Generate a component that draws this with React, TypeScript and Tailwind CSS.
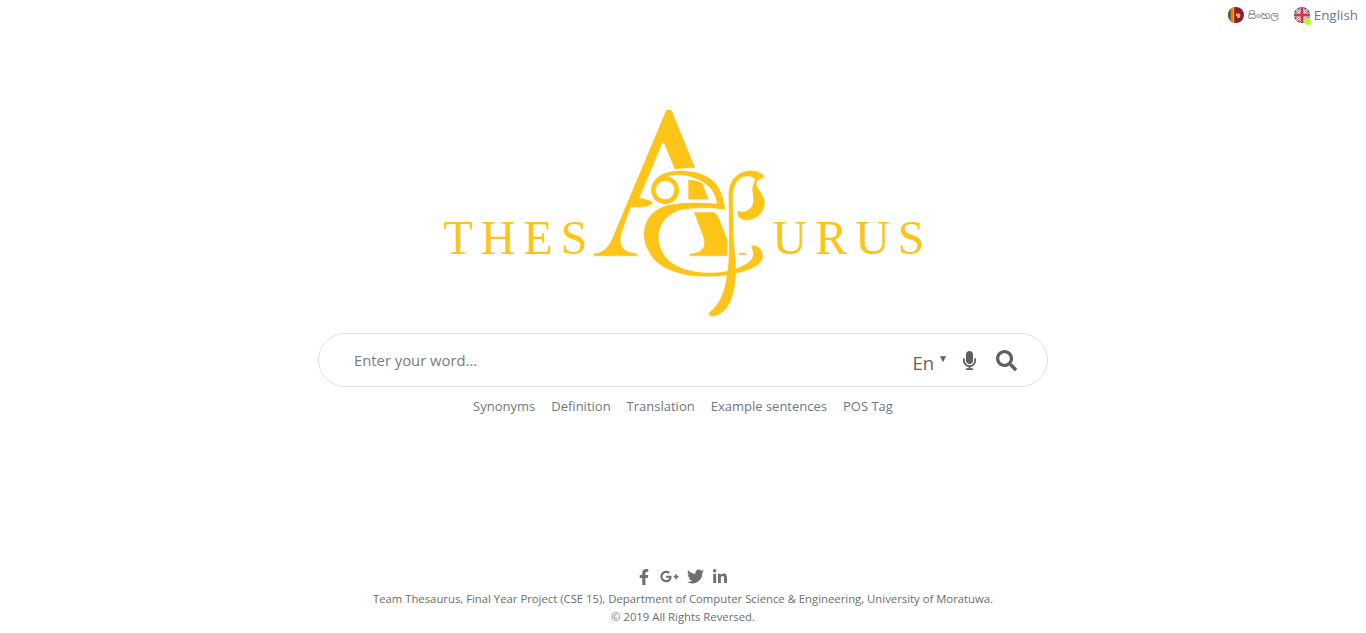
import { FaMicrophone, FaSearch, FaFacebookF, FaGooglePlusG, FaTwitter, FaLinkedinIn } from "react-icons/fa";

const font = { fontFamily: '"Open Sans", "Noto Sans", sans-serif' };

function LankaFlag() {
  return (
    <svg width="16" height="16" viewBox="0 0 16 16" className="block">
      <defs><clipPath id="lk"><circle cx="8" cy="8" r="8" /></clipPath></defs>
      <g clipPath="url(#lk)">
        <rect width="16" height="16" fill="#8d1c3e" />
        <rect width="2.5" height="16" fill="#0a7f5a" />
        <rect x="2.5" width="2.5" height="16" fill="#ef7d00" />
        <rect x="5" width="1.2" height="16" fill="#f7b718" />
        <path d="M8 6.5h3.5l1 2-1 2.5H9.5l-.5-2H8z" fill="#f7b718" />
      </g>
    </svg>
  );
}

function UkFlag() {
  return (
    <div className="relative w-4 h-4">
      <svg width="16" height="16" viewBox="0 0 16 16" className="block">
        <defs><clipPath id="uk"><circle cx="8" cy="8" r="8" /></clipPath></defs>
        <g clipPath="url(#uk)">
          <rect width="16" height="16" fill="#1f2f70" />
          <path d="M0 0L16 16M16 0L0 16" stroke="#f2f2f2" strokeWidth="3" />
          <path d="M0 0L16 16M16 0L0 16" stroke="#d8324a" strokeWidth="0.9" />
          <rect x="5.5" width="5" height="16" fill="#f2f2f2" />
          <rect y="5.5" width="16" height="5" fill="#f2f2f2" />
          <rect x="6.5" width="3" height="16" fill="#d8324a" />
          <rect y="6.5" width="16" height="3" fill="#d8324a" />
        </g>
      </svg>
      <span className="absolute right-[-1px] bottom-[-2px] w-[7px] h-[7px] rounded-full bg-[#adff2f]" />
    </div>
  );
}

function LogoMark() {
  return (
    <svg width="190" height="225" viewBox="0 0 570 675" className="block shrink-0" fill="#fec418" aria-label="logo">
      <g style={{ filter: "drop-shadow(2px 3px 2px rgba(254,196,24,0.22))" }}>
        <path d="M232 30H247L318 203C298 203 278 204 258 208L225 130C222 128 219 130 217 135L150 295C165 295 182 300 191 309C185 317 172 322 125 322L98 395C92 412 93 435 103 446C113 456 130 458 145 461V467H14V461C40 458 55 446 67 422Z" />
        <path fillRule="evenodd" d="M228 228a42 42 0 1 0 .01 0ZM228 242a28 28 0 1 1-.01 0Z" />
        <path d="M197 240C215 220 245 211 280 212C330 213 370 230 390 265C400 285 405 305 407 328C400 327 392 326 385 326C384 300 378 280 362 262C340 238 300 223 262 224C240 225 222 230 207 245Z" />
        <path d="M407 328C370 321 320 322 282 328C250 334 226 352 214 380C203 410 208 440 226 467C250 500 300 516 350 518C375 519 395 518 418 513L416 525C385 530 350 530 315 527C255 522 205 500 182 460C160 425 160 385 178 355C195 328 225 315 265 311C310 307 365 307 407 316Z" />
        <path d="M298 240C315 240 330 243 340 250L358 298H298Z" />
        <path d="M315 337H372C380 338 384 344 388 352L415 420V467H302V461C325 460 340 452 345 438C348 428 345 415 341 404Z" />
        <path d="M419 290C418 262 426 238 448 223C470 208 505 208 527 228C517 238 503 238 502 250C501 262 518 276 525 298C531 322 518 345 495 355C478 362 458 362 449 350C445 344 445 338 446 333C460 338 478 335 488 320C497 305 492 285 490 270C489 255 500 245 497 236C485 225 465 226 450 238C436 250 431 270 431 295L433 400C434 440 442 480 440 520C438 560 432 595 415 620C402 638 385 648 365 648L358 640C385 620 402 590 410 550C418 510 421 470 420 420Z" />
        <path d="M488 437C505 434 520 447 521 465C522 485 505 498 485 506C465 514 445 518 420 525L421 513C445 505 470 495 484 482C495 470 495 455 488 445Z" />
        <rect x="450" y="459" width="21" height="5" />
      </g>
    </svg>
  );
}

const tabs = ["Synonyms", "Definition", "Translation", "Example sentences", "POS Tag"];

export default function App() {
  return (
    <div className="h-[633px] bg-white flex flex-col overflow-hidden" style={font}>
      <header className="flex justify-end items-center pr-[8px] h-[30px] text-[#6f7780]">
        <div className="flex items-center gap-[4px] text-[10px]">
          <LankaFlag />
          <span style={{ fontFamily: '"Noto Sans Sinhala", "Open Sans", sans-serif' }}>සිංහල</span>
        </div>
        <div className="flex items-center gap-[4px] ml-[15px] text-[13.4px]">
          <UkFlag />
          <span>English</span>
        </div>
      </header>

      <div className="flex justify-center items-start mt-[70px] h-[233px]">
        <div className="flex items-start pl-[10px]">
          <span className="mt-[111px] w-[146px] text-[48px] leading-[54px] tracking-[8px] text-[#fec418] whitespace-nowrap" style={{ fontFamily: '"Liberation Serif", serif' }}>THES</span>
          <LogoMark />
          <span className="-ml-[7px] mt-[111px] text-[48px] leading-[54px] tracking-[8px] text-[#fec418] whitespace-nowrap" style={{ fontFamily: '"Liberation Serif", serif' }}>URUS</span>
        </div>
      </div>

      <div className="flex justify-center">
        <div className="w-[730px] h-[54px] rounded-full border border-[#dfe1e5] flex items-center pl-[35px] pr-[30px]">
          <span className="flex-1 text-[14.8px] text-[#757c84]">Enter your word...</span>
          <span className="text-[18.5px] text-[#6b625c] mt-[6px]">En</span>
          <span className="text-[10px] text-[#5f5f5f] ml-[4px] -mt-[4px]">▼</span>
          <FaMicrophone className="ml-[12px] text-[#5f5f5f]" size={19} />
          <FaSearch className="ml-[17px] text-[#5f5f5f]" size={21} />
        </div>
      </div>

      <nav className="flex justify-center gap-4 mt-[9px] text-[13px] leading-[20px] text-[#6f7780]">
        {tabs.map((t) => <span key={t}>{t}</span>)}
      </nav>

      <footer className="mt-auto pb-[7px] flex flex-col items-center text-[#6c6c6c]">
        <div className="flex items-center gap-[8px] mr-[3px] text-[#6f6f6f]">
          <FaFacebookF size={16} />
          <FaGooglePlusG size={19} />
          <FaTwitter size={17} />
          <FaLinkedinIn size={16} />
        </div>
        <p className="mt-[4px] text-[11.32px] leading-[18px]">Team Thesaurus, Final Year Project (CSE 15), Department of Computer Science &amp; Engineering, University of Moratuwa.</p>
        <p className="text-[11.32px] leading-[18px]">© 2019 All Rights Reversed.</p>
      </footer>
    </div>
  );
}
